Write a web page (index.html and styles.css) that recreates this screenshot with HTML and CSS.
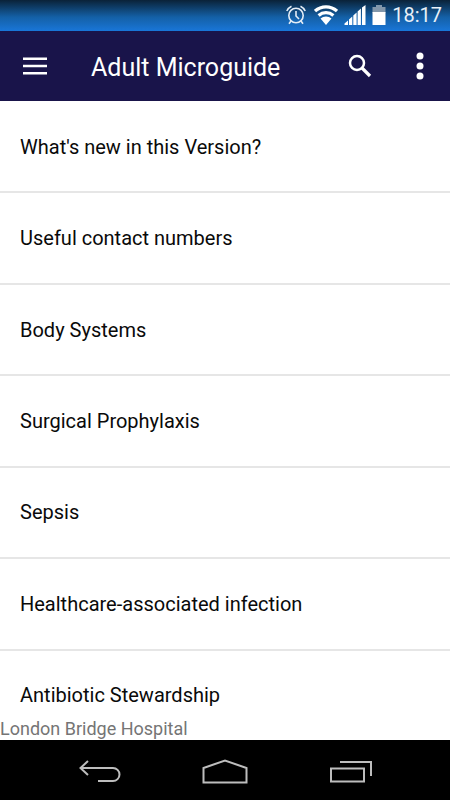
FILE: index.html
```html
<!DOCTYPE html>
<html lang="en">
<head>
<meta charset="utf-8">
<meta name="viewport" content="width=device-width, initial-scale=1">
<title>Adult Microguide</title>
<link rel="stylesheet" href="styles.css">
</head>
<body>
<div class="status-bar">
  <svg width="22" height="20" viewBox="0 0 22 20" fill="none" stroke="#e4edf6" stroke-width="1.6">
    <circle cx="10" cy="10.500" r="7.200"/>
    <path d="M10 6v5l3 3M.8 6A10 10 0 0 1 5.500 1.200M19.200 6a10 10 0 0 0-4.700-4.800M5 16l-2 2.800M15 16l2 2.800"/>
  </svg>
  <svg width="24" height="20" viewBox="0 0 24 20" fill="none" stroke="#fff" stroke-width="3.300">
    <path d="M1 6a16.500 16.500 0 0 1 22 0M4.600 10.400a11.500 11.500 0 0 1 14.800 0"/>
    <path d="M6.500 13.500a8.500 8.500 0 0 1 11 0L12 20z" fill="#fff" stroke="none"/>
  </svg>
  <svg width="22" height="20" viewBox="0 0 22 20" fill="#fff">
    <path d="M.5 20v-1.500L4 15.500V20zM5 20v-5.500l3.300-3V20zM9.300 20v-9.500l3.300-3V20zM13.600 20V6.600l3.300-3V20zM18 20V2.600L21.500 0v20z"/>
  </svg>
  <svg width="14" height="20" viewBox="0 0 14 20">
    <path d="M4 0h6v2h3.500v6H.5V2H4z" fill="#8297ab"/>
    <path d="M.5 7h13v13H.5z" fill="#fff"/>
  </svg>
  <time class="clock">18:17</time>
</div>
<header class="app-bar">
  <button class="icon-button menu" aria-label="Menu">
    <svg width="24" height="18" viewBox="0 0 24 18" fill="#fff"><path d="M0 .6h24v2.400H0zM0 7.800h24v2.400H0zM0 15h24v2.400H0z"/></svg>
  </button>
  <h1 class="title">Adult Microguide</h1>
  <button class="icon-button search" aria-label="Search">
    <svg width="24" height="24" viewBox="0 0 24 24" fill="none" stroke="#fff">
      <circle cx="9" cy="9" r="7" stroke-width="2.500"/><path d="M14 14l8 8" stroke-width="3.200"/>
    </svg>
  </button>
  <button class="icon-button more" aria-label="More options">
    <svg width="8" height="28" viewBox="0 0 8 28" fill="#fff"><circle cx="4" cy="4" r="3.500"/><circle cx="4" cy="14" r="3.500"/><circle cx="4" cy="24" r="3.500"/></svg>
  </button>
</header>
<main class="content">
  <ul class="list">
    <li><a href="#new">What's new in this Version?</a></li>
    <li><a href="#contacts">Useful contact numbers</a></li>
    <li><a href="#body-systems">Body Systems</a></li>
    <li><a href="#surgical">Surgical Prophylaxis</a></li>
    <li><a href="#sepsis">Sepsis</a></li>
    <li><a href="#healthcare">Healthcare-associated infection</a></li>
    <li><a href="#stewardship">Antibiotic Stewardship</a></li>
  </ul>
  <p class="hospital">London Bridge Hospital</p>
</main>
<nav class="nav-bar">
  <button class="icon-button" aria-label="Back">
    <svg width="44" height="24" viewBox="0 0 44 24" fill="none" stroke="#bdbdbd" stroke-width="2"><path d="M2 9h33a6.300 6.300 0 0 1 0 13H20M10 2L2.500 9L10 16"/></svg>
  </button>
  <button class="icon-button" aria-label="Home">
    <svg width="46" height="26" viewBox="0 0 46 26" fill="none" stroke="#bdbdbd" stroke-width="2"><path d="M1.500 24.500V10L23 2.500L44.500 10v14.500z"/></svg>
  </button>
  <button class="icon-button" aria-label="Recent apps">
    <svg width="44" height="24" viewBox="0 0 44 24" fill="none" stroke="#bdbdbd" stroke-width="2"><path d="M3 9.500h33V22.500H3zM12 3h31v14"/></svg>
  </button>
</nav>
</body>
</html>
```

FILE: styles.css
```css
* { box-sizing: border-box; }
body {
  margin: 0;
  min-height: 100vh;
  display: flex;
  flex-direction: column;
  background: #fff;
  color: #0a0a0a;
  font-family: Roboto, sans-serif;
}
svg { display: block; flex: none; }
.status-bar {
  height: 31px;
  padding: 0 8px 1px;
  display: flex;
  align-items: center;
  justify-content: flex-end;
  gap: 6px;
  background: linear-gradient(#0a2238, #1460a6 55%, #1976d8);
}
.clock {
  color: #e8f0f8;
  font-size: 20px;
  line-height: 24px;
}
.app-bar {
  height: 70px;
  padding: 0 16px 0 23px;
  display: flex;
  align-items: center;
  background: #19144a;
  color: #fff;
}
.icon-button {
  padding: 0;
  border: 0;
  background: none;
  display: flex;
  align-items: center;
  justify-content: center;
  cursor: pointer;
}
.menu, .search { width: 24px; height: 48px; }
.more { width: 28px; height: 48px; margin-left: 34px; }
.title {
  flex: 1;
  margin: 0 0 0 44px;
  padding-top: 4px;
  font-size: 25px;
  font-weight: 400;
  line-height: 32px;
}
.content {
  position: relative;
  flex: 1;
  display: flex;
  flex-direction: column;
}
.list {
  flex: 1;
  margin: 0;
  padding: 1px 0 0;
  list-style: none;
  display: flex;
  flex-direction: column;
}
.list li { flex: 1; display: flex; }
.list li + li { border-top: 2px solid #e6e6e6; }
.list a {
  flex: 1;
  display: flex;
  align-items: center;
  padding: 8px 20px;
  color: inherit;
  font-size: 20px;
  line-height: 28px;
  text-decoration: none;
}
.hospital {
  position: absolute;
  left: 0;
  bottom: 0;
  margin: 0;
  color: #757575;
  font-size: 18px;
  line-height: 22px;
}
.nav-bar {
  height: 60px;
  padding: 2px 37px 0;
  display: flex;
  align-items: center;
  background: #000;
}
.nav-bar .icon-button { flex: 1; height: 48px; }
```
